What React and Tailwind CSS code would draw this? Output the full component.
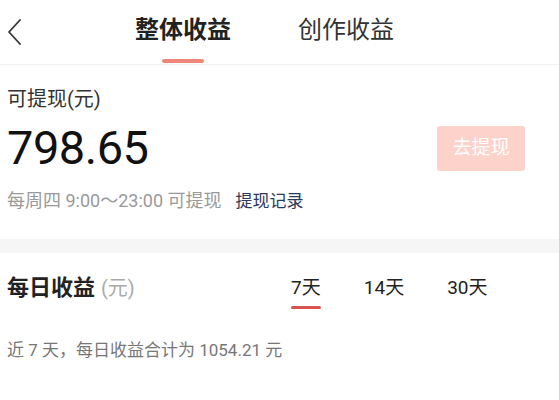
const FONT = 'Roboto, "Noto Sans CJK SC", "Noto Sans", sans-serif';

const RANGES = ["7天", "14天", "30天"];

function BackIcon() {
  return (
    <svg width="16" height="28" viewBox="0 0 16 28" fill="none">
      <path d="M14 2 L3 14 L14 26" stroke="#333" strokeWidth="1.8" strokeLinecap="round" strokeLinejoin="round" />
    </svg>
  );
}

export default function App() {
  const active = "7天";

  return (
    <div className="h-[400px] w-[559px] overflow-hidden bg-white text-[#222]" style={{ fontFamily: FONT }}>
      <header className="relative flex h-[65px] items-start border-b border-[#f0f0f0]">
        <div className="pl-[6px] pt-[18px]">
          <BackIcon />
        </div>
        <div className="absolute left-[135px] top-[13px] flex flex-col items-center">
          <span className="text-[24px] font-bold leading-[34px] text-[#222]">整体收益</span>
          <span className="mt-[12px] h-[4px] w-[42px] rounded-full bg-[#ef8677]" />
        </div>
        <span className="absolute left-[298px] top-[13px] text-[24px] leading-[34px] text-[#333]">创作收益</span>
      </header>

      <section className="px-[7px] pt-[20px]">
        <p className="text-[20px] leading-[28px] text-[#333]">可提现(元)</p>
        <div className="mt-[10px] flex items-center justify-between pr-[27px]">
          <span className="text-[47px] leading-[50px] tracking-[-0.5px] text-[#111]">798.65</span>
          <button className="h-[45px] w-[88px] rounded-[3px] bg-[#fdd2ca] text-[19px] text-white">去提现</button>
        </div>
        <p className="mt-[16px] flex items-center text-[18px] leading-[24px] text-[#9a9a9a]">
          每周四 9:00～23:00 可提现
          <span className="ml-[14px] text-[17px] text-[#2b3a5c]">提现记录</span>
        </p>
      </section>

      <div className="mt-[26px] h-[14px] bg-[#f6f6f6]" />

      <section className="px-[7px] pt-[18px]">
        <div className="flex items-start">
          <h2 className="flex items-baseline text-[22px] font-bold leading-[34px] text-[#222]">
            每日收益
            <span className="ml-[6px] text-[20px] font-normal text-[#aaa]">(元)</span>
          </h2>
          <div className="ml-[156px] flex gap-[43px]">
            {RANGES.map((r) => (
              <div key={r} className="flex flex-col items-center">
                <span className="text-[19px] leading-[34px] text-[#222]">{r}</span>
                {r === active ? <span className="mt-[1px] h-[3px] w-[30px] rounded-full bg-[#d9544d]" /> : null}
              </div>
            ))}
          </div>
        </div>
        <p className="mt-[29px] text-[17px] leading-[24px] text-[#777]">近 7 天，每日收益合计为 1054.21 元</p>
      </section>
    </div>
  );
}
